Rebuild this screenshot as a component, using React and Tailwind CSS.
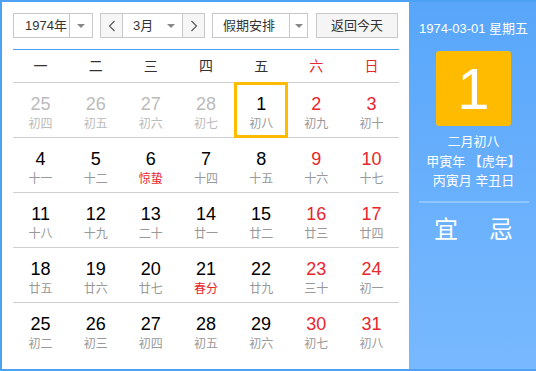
import React from "react";

const FONT = { fontFamily: '"Liberation Sans", "Noto Sans CJK SC", sans-serif' };

const rows = [
  [["25","初四","p"],["26","初五","p"],["27","初六","p"],["28","初七","p"],["1","初八","sel"],["2","初九","we"],["3","初十","we"]],
  [["4","十一"],["5","十二"],["6","惊蛰","term"],["7","十四"],["8","十五"],["9","十六","we"],["10","十七","we"]],
  [["11","十八"],["12","十九"],["13","二十"],["14","廿一"],["15","廿二"],["16","廿三","we"],["17","廿四","we"]],
  [["18","廿五"],["19","廿六"],["20","廿七"],["21","春分","term"],["22","廿九"],["23","三十","we"],["24","初一","we"]],
  [["25","初二"],["26","初三"],["27","初四"],["28","初五"],["29","初六"],["30","初七","we"],["31","初八","we"]],
];

function Arrow() {
  return <span className="block w-0 h-0 border-l-[4px] border-r-[4px] border-t-[4px] border-l-transparent border-r-transparent border-t-[#888]" />;
}

function Chev({ dir }) {
  return (
    <svg width="8" height="12" viewBox="0 0 8 12">
      <path d={dir === "l" ? "M6.5 1 L1.5 6 L6.5 11" : "M1.5 1 L6.5 6 L1.5 11"} fill="none" stroke="#555" strokeWidth="1.1" />
    </svg>
  );
}

export default function App() {
  return (
    <div style={FONT} className="w-[536px] h-[371px] border-2 border-r-0 border-[#4ea2f6] flex bg-white overflow-hidden">
      <div className="w-[407px] pl-[11px] pr-[10px] pt-[11px] flex flex-col">
        <div className="flex items-center h-[25px] text-[13px] text-[#333]">
          <div className="flex h-[25px] w-[80px] border border-[#c8c8c8] bg-white">
            <div className="w-[55px] flex items-center pl-[11px]">1974年</div>
            <div className="flex-1 border-l border-[#c8c8c8] flex items-center justify-center"><Arrow /></div>
          </div>
          <div className="flex h-[25px] w-[105px] ml-[7px] border border-[#c8c8c8] bg-white">
            <div className="w-[22px] bg-[#f6f6f6] flex items-center justify-center border-r border-[#c8c8c8]"><Chev dir="l" /></div>
            <div className="flex-1 flex items-center pl-[10px] pr-[7px] justify-between">
              <span>3月</span><Arrow />
            </div>
            <div className="w-[22px] bg-[#f6f6f6] flex items-center justify-center border-l border-[#c8c8c8]"><Chev dir="r" /></div>
          </div>
          <div className="flex h-[25px] w-[96px] ml-[7px] border border-[#c8c8c8] bg-white">
            <div className="w-[76px] flex items-center pl-[10px]">假期安排</div>
            <div className="flex-1 border-l border-[#c8c8c8] flex items-center justify-center"><Arrow /></div>
          </div>
          <div className="h-[25px] w-[82px] ml-[8px] border border-[#c8c8c8] bg-[#f5f5f5] flex items-center justify-center">返回今天</div>
        </div>
        <div className="mt-[11px] h-px bg-[#4ea2f6]" />
        <div className="grid grid-cols-7 h-[33px] items-center text-[14px] text-[#333] border-b border-[#cfcfcf]">
          {["一","二","三","四","五","六","日"].map((d, i) => (
            <div key={d} className={"text-center " + (i >= 5 ? "text-[#e8262d]" : "")}>{d}</div>
          ))}
        </div>
        {rows.map((row, ri) => (
          <div key={ri} className={"grid grid-cols-7 h-[55px] " + (ri < 4 ? "border-b border-[#cfcfcf]" : "")}>
            {row.map(([n, l, t], ci) => {
              const numColor = t === "p" ? "text-[#bbbbbb]" : t === "we" ? "text-[#e8262d]" : "text-black";
              const lunColor = t === "p" ? "text-[#bbbbbb]" : t === "term" ? "text-[#e8262d]" : "text-[#999]";
              return (
                <div key={ci} className="relative flex flex-col items-center pt-[10px]">
                  {t === "sel" && (
                    <div className="absolute left-0 right-[1px] -top-px -bottom-px border-[3px] border-[#ffbb00]" />
                  )}
                  <div className={"text-[18px] leading-[22px] " + numColor}>{n}</div>
                  <div className={"text-[12px] leading-[16px] mt-px " + lunColor}>{l}</div>
                </div>
              );
            })}
          </div>
        ))}
      </div>
      <div className="flex-1 bg-gradient-to-b from-[#58a6fa] to-[#78b9fe] flex flex-col items-center text-white pl-[2px]">
        <div className="mt-[17px] text-[13px] leading-[20px]">1974-03-01 星期五</div>
        <div className="mt-[12px] w-[75px] h-[75px] rounded-[3px] bg-[#ffbb00] flex items-center justify-center text-[58px] leading-none">1</div>
        <div className="mt-[6px] text-[13px] leading-[19.5px] text-center">
          <div>二月初八</div>
          <div>甲寅年 【虎年】</div>
          <div>丙寅月 辛丑日</div>
        </div>
        <div className="mt-[10px] w-[110px] h-[2px] bg-[#8fc6ff]" />
        <div className="mt-[13px] flex gap-[31px] text-[24px] leading-[28px]">
          <span>宜</span><span>忌</span>
        </div>
      </div>
    </div>
  );
}
